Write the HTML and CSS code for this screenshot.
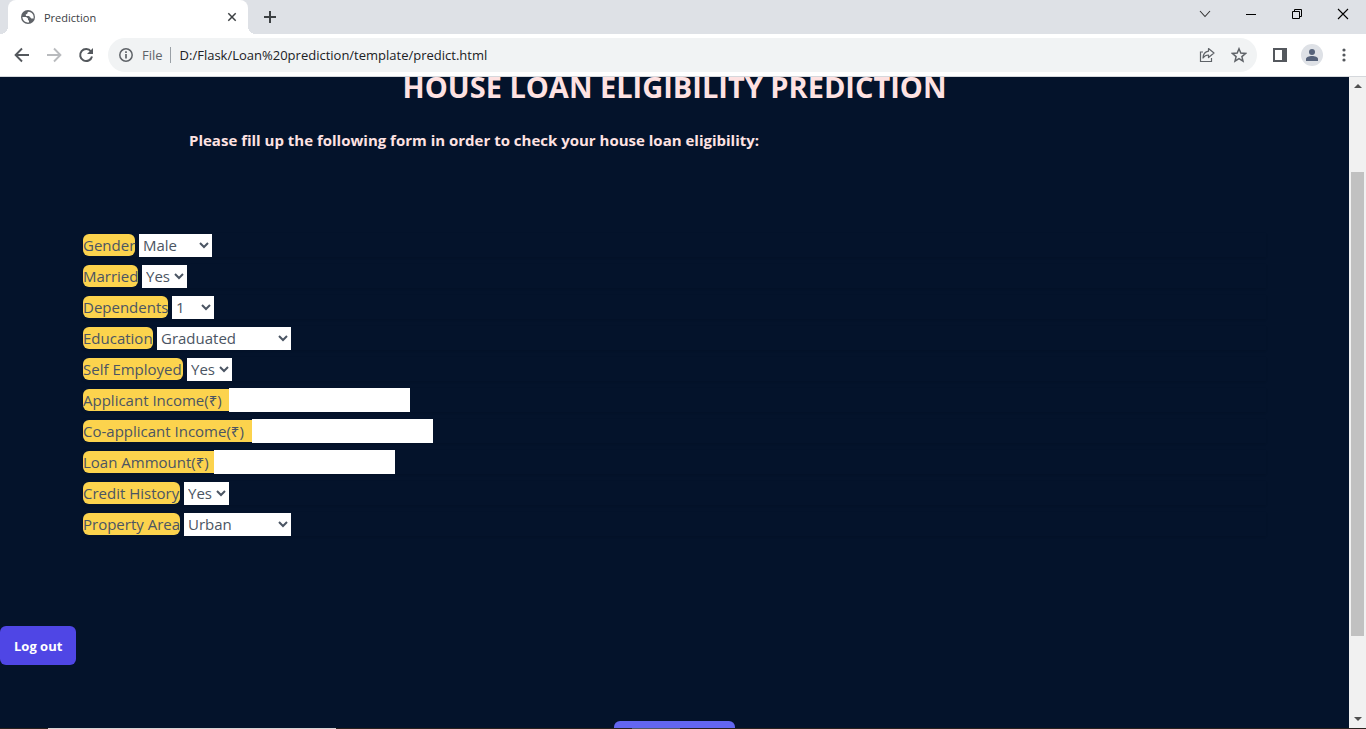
FILE: index.html
```html
<!DOCTYPE html>
<html lang="en">
<head>
<meta charset="utf-8">
<title>Prediction</title>
<link rel="stylesheet" href="styles.css">
</head>
<body>
<div class="browser">
  <header class="tabstrip">
    <div class="tab">
      <svg class="globe" viewBox="0 0 16 16" width="16" height="16"><circle cx="8" cy="8" r="7" fill="#5f6368"/><path d="M2.400 8h3.800l1.800 1.500v1.700l1 .3v2c-3.600.3-6.300-2-6.600-5.500zM8.600 2.800c-1.300.6-1.500 1.200-1.200 2l-1.700.8.300 1.400h3l1.200 1.300 1.100 1.200h2.300c.6-3.500-1.600-6.400-5-6.700z" fill="#fff"/></svg>
      <span class="tab-title">Prediction</span>
      <button class="tab-close" aria-label="Close tab"><svg viewBox="0 0 10 10" width="10" height="10"><path d="M1.300 1.300l7.400 7.400M8.700 1.300L1.300 8.700" stroke="#3c4043" stroke-width="1.500"/></svg></button>
    </div>
    <button class="new-tab" aria-label="New tab"><svg viewBox="0 0 12 12" width="12" height="12"><path d="M6 0v12M0 6h12" stroke="#3c4043" stroke-width="2"/></svg></button>
    <div class="window-controls">
      <button aria-label="Search tabs"><svg viewBox="0 0 12 12" width="12" height="12"><path d="M1 3l5 5.500L11 3" fill="none" stroke="#333" stroke-width="1.100"/></svg></button>
      <button aria-label="Minimize"><svg viewBox="0 0 12 12" width="12" height="12"><path d="M1 6.500h10" stroke="#000"/></svg></button>
      <button aria-label="Restore"><svg viewBox="0 0 12 12" width="12" height="12"><path d="M1.500 3.500h7v7h-7zM3.500 3.500v-2h7v7h-2" fill="none" stroke="#000"/></svg></button>
      <button aria-label="Close"><svg viewBox="0 0 12 12" width="12" height="12"><path d="M1 1l10 10M11 1L1 11" stroke="#000" stroke-width="1.100"/></svg></button>
    </div>
  </header>

  <nav class="toolbar">
    <button aria-label="Back"><svg viewBox="0 0 16 16" width="16" height="16"><path d="M15 8H2M8 1.500L1.600 8 8 14.500" fill="none" stroke="#54585d" stroke-width="1.900"/></svg></button>
    <button aria-label="Forward"><svg viewBox="0 0 16 16" width="16" height="16"><path d="M1 8h13M8 1.500L14.400 8 8 14.500" fill="none" stroke="#b9bbbe" stroke-width="1.900"/></svg></button>
    <button aria-label="Reload"><svg viewBox="0 0 16 16" width="16" height="16"><path d="M13 4.500A6 6 0 1 0 14 9.500" fill="none" stroke="#54585d" stroke-width="2"/><path d="M15 1v6H9z" fill="#54585d"/></svg></button>
    <div class="omnibox">
      <svg viewBox="0 0 14 14" width="14" height="14"><circle cx="7" cy="7" r="6.200" fill="none" stroke="#5f6368" stroke-width="1.500"/><path d="M7 6v4.500M7 3.200v1.700" stroke="#5f6368" stroke-width="1.700"/></svg>
      <span class="scheme">File</span>
      <input class="address" type="text" aria-label="Address" value="D:/Flask/Loan%20prediction/template/predict.html">
      <button aria-label="Share"><svg viewBox="0 0 16 16" width="16" height="16"><path d="M4 5H1.500v9.500h11V11" fill="none" stroke="#5f6368" stroke-width="1.200"/><path d="M9.500 1.500L15 6l-5.500 4.500V8C7 8 5.300 9 4 11c.2-4 2-6.300 5.500-6.800z" fill="none" stroke="#5f6368" stroke-width="1.200" stroke-linejoin="round"/></svg></button>
      <button aria-label="Bookmark"><svg viewBox="0 0 16 16" width="16" height="16"><path d="M8 1.800l1.800 4.300 4.700.4-3.600 3.100 1.100 4.600L8 11.700l-4 2.500 1.100-4.600L1.500 6.500l4.700-.4z" fill="none" stroke="#5f6368" stroke-width="1.500"/></svg></button>
    </div>
    <div class="toolbar-end">
      <button aria-label="Side panel"><svg viewBox="0 0 14 14" width="14" height="14"><path fill="#54585d" fill-rule="evenodd" d="M0 0h14v14H0zM2 2v10h7V2z"/></svg></button>
      <button class="avatar" aria-label="Profile"><svg viewBox="0 0 12 12" width="12" height="12"><circle cx="6" cy="3" r="3" fill="#56627a"/><path d="M0 12v-2c0-2 3-3 6-3s6 1 6 3v2z" fill="#56627a"/></svg></button>
      <button aria-label="Menu"><svg viewBox="0 0 4 14" width="4" height="14"><g fill="#54585d"><circle cx="2" cy="2" r="1.600"/><circle cx="2" cy="7" r="1.600"/><circle cx="2" cy="12" r="1.600"/></g></svg></button>
    </div>
  </nav>

  <div class="viewport">
    <main class="page">
      <h1 class="title">HOUSE LOAN ELIGIBILITY PREDICTION</h1>
      <p class="intro">Please fill up the following form in order to check your house loan eligibility:</p>
      <form class="loan-form" id="loan">
        <div class="row"><label class="w-gender" for="gender">Gender</label><select class="s-gender" id="gender"><option>Male</option><option>Female</option></select></div>
        <div class="row"><label class="w-married" for="married">Married</label><select class="s-yes" id="married"><option>Yes</option><option>No</option></select></div>
        <div class="row"><label class="w-dependents" for="dependents">Dependents</label><select class="s-count" id="dependents"><option>1</option><option>2</option><option>3+</option></select></div>
        <div class="row"><label class="w-education" for="education">Education</label><select class="s-education" id="education"><option>Graduated</option><option>Not Graduated</option></select></div>
        <div class="row"><label class="w-employed" for="employed">Self Employed</label><select class="s-yes" id="employed"><option>Yes</option><option>No</option></select></div>
        <div class="row joined"><label class="w-income" for="income">Applicant Income(₹)</label><input id="income" type="text"></div>
        <div class="row joined"><label class="w-coincome" for="coincome">Co-applicant Income(₹)</label><input id="coincome" type="text"></div>
        <div class="row joined"><label class="w-amount" for="amount">Loan Ammount(₹)</label><input id="amount" type="text"></div>
        <div class="row"><label class="w-credit" for="credit">Credit History</label><select class="s-yes" id="credit"><option>Yes</option><option>No</option></select></div>
        <div class="row"><label class="w-credit" for="area">Property Area</label><select class="s-area" id="area"><option>Urban</option><option>Semi-urban</option><option>Rural</option></select></div>
      </form>
      <button class="logout">Log out</button>
      <button class="submit" form="loan" aria-label="Submit"></button>
    </main>
    <div class="scrollbar">
      <svg viewBox="0 0 17 17" width="17" height="17"><path d="M5 11h8L9 7z" fill="#505050"/></svg>
      <div class="track"><div class="thumb"></div></div>
      <svg viewBox="0 0 17 17" width="17" height="17"><path d="M5 6h8l-4 4z" fill="#505050"/></svg>
    </div>
  </div>
  <footer class="taskbar"><div class="search-edge"></div><div class="active-edge"></div></footer>
</div>
</body>
</html>
```
FILE: styles.css
```css
* { box-sizing: border-box; }
body { margin: 0; font-family: "Open Sans", "Noto Sans", sans-serif; }
button { border: 0; padding: 0; background: none; font: inherit; }
svg { display: block; flex: none; }

.browser { display: flex; flex-direction: column; height: 100vh; overflow: hidden; background: #fff; }

.tabstrip { display: flex; flex: none; height: 34px; padding-left: 8px; background: #dee1e6; }
.tab { position: relative; display: flex; align-items: center; width: 240px; padding: 0 11px 0 12px; background: #fff; border-radius: 8px 8px 0 0; }
.tab::before, .tab::after { content: ""; position: absolute; bottom: 0; width: 8px; height: 8px; }
.tab::before { right: 100%; background: radial-gradient(circle at 0 0, #dee1e6 8px, #fff 8px); }
.tab::after { left: 100%; background: radial-gradient(circle at 100% 0, #dee1e6 8px, #fff 8px); }
.tab-title { flex: 1; margin-left: 8px; font-size: 11px; color: #3c4043; }
.new-tab { display: grid; place-items: center; width: 44px; }
.window-controls { display: flex; margin-left: auto; padding-bottom: 6px; }
.window-controls button { display: grid; place-items: center; width: 46px; }

.toolbar { display: flex; flex: none; align-items: center; height: 43px; padding: 0 14px; gap: 16px; border-bottom: 1px solid #d5d8dc; }
.omnibox { display: flex; flex: 1; align-items: center; height: 34px; margin-left: -2px; padding: 0 10px 0 11px; border-radius: 17px; background: #f1f3f4; }
.scheme { margin-left: 9px; padding-right: 7px; border-right: 1px solid #9aa0a6; font-size: 13px; line-height: 16px; color: #5f6368; }
.address { flex: 1; min-width: 0; margin-left: 9px; padding: 0; border: 0; background: none; font: 13px "Open Sans", sans-serif; color: #202124; }
.omnibox button { margin-left: 16px; }
.toolbar-end { display: flex; align-items: center; gap: 14px; padding-right: 6px; }
.avatar { display: grid; place-items: center; width: 22px; height: 22px; border-radius: 50%; background: #dee1e6; }
.toolbar-end button:last-child { margin-left: 5px; }

.viewport { display: flex; flex: 1; min-height: 0; }
.page { flex: 1; display: flex; flex-direction: column; overflow: hidden; background: #04132b; color: #fee2e2; }
.title { flex: none; margin: -8px 0 0; font-size: 29px; line-height: 36px; font-weight: 700; text-align: center; }
.intro { flex: none; margin: 23px 0 0 189px; font-size: 15px; line-height: 24px; font-weight: 700; }
.loan-form { display: flex; flex: none; flex-direction: column; gap: 7px; margin: 81px 83px 0; color: #4b5563; font-size: 15px; }
.row { display: flex; align-items: center; gap: 4px; height: 24px; box-shadow: 0 1px 2px rgba(0, 0, 0, .1); }
.joined { gap: 0; }
.row label { height: 22px; line-height: 22px; border-radius: 6px; background: #fcd34d; white-space: nowrap; }
.joined label { border-radius: 6px 0 0 6px; }
.row select { height: 23px; padding: 0; border: 0; border-radius: 0; background: #fff; color: #4b5563; font: 15px "Open Sans", sans-serif; }
.row input { width: 181px; height: 24px; padding: 0 4px; border: 0; background: #fff; font: inherit; }
.w-gender { width: 52px; }
.w-married { width: 55px; }
.w-dependents { width: 85px; }
.w-education { width: 70px; }
.w-employed { width: 100px; }
.w-income { width: 146px; }
.w-coincome { width: 169px; }
.w-amount { width: 131px; }
.w-credit { width: 97px; }
.s-gender { width: 73px; }
.s-yes { width: 45px; }
.s-count { width: 42px; }
.s-education { width: 134px; }
.s-area { width: 107px; }
.logout { flex: none; align-self: flex-start; height: 39px; margin-top: 90px; padding: 0 14px; border-radius: 6px; background: #4f46e5; color: #fff; font-size: 13px; font-weight: 700; }
.submit { flex: none; align-self: center; width: 121px; height: 38px; margin-top: 56px; border-radius: 6px; background: #6366f1; }

.scrollbar { display: flex; flex: none; flex-direction: column; width: 17px; background: #f1f1f1; }
.track { flex: 1; padding: 78px 2px 0; }
.thumb { height: 86%; background: #c1c1c1; }
.taskbar { display: flex; flex: none; height: 1px; background: #29221f; }
.search-edge { width: 288px; margin-left: 48px; background: #d8d4d4; }
.active-edge { width: 48px; margin-left: 296px; background: #555a66; }
```
